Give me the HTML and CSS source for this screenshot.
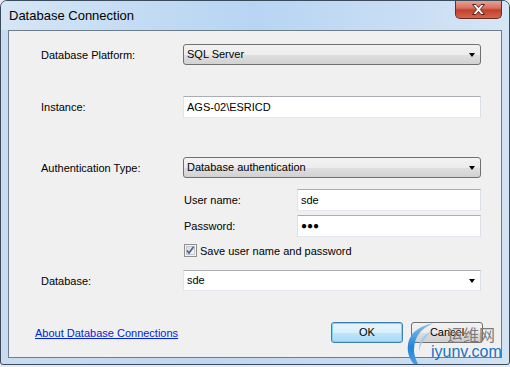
FILE: index.html
```html
<!DOCTYPE html>
<html>
<head>
    <title>Database Connection</title>
    <link rel="stylesheet" href="styles.css">
</head>
<body>
    <div class="window">
        <div class="titlebar">
            <span class="title">Database Connection</span>
            <div class="close-btn">
                <svg width="15" height="11" viewBox="0 0 15 11">
                    <path d="M1.5 0.5h3.5l2.5 3 2.5-3h3.5l-4.2 5 4.2 5h-3.5l-2.5-3-2.5 3h-3.5l4.2-5z" fill="#ffffff" stroke="#5a2020" stroke-width="1" stroke-linejoin="round"/>
                </svg>
            </div>
        </div>
        <div class="client">
            <div class="row row-platform">
                <label class="field-label">Database Platform:</label>
                <div class="combo">SQL Server<span class="arrow"></span></div>
            </div>
            <div class="row row-instance">
                <label class="field-label">Instance:</label>
                <div class="textbox">AGS-02\ESRICD</div>
            </div>
            <div class="row row-auth">
                <label class="field-label">Authentication Type:</label>
                <div class="combo">Database authentication<span class="arrow"></span></div>
            </div>
            <div class="sub-row row-user">
                <label class="sub-label">User name:</label>
                <div class="textbox small">sde</div>
            </div>
            <div class="sub-row row-pass">
                <label class="sub-label">Password:</label>
                <div class="textbox small dots">&#9679;&#9679;&#9679;</div>
            </div>
            <div class="sub-row row-save">
                <svg class="checkbox" width="13" height="13" viewBox="0 0 13 13">
                    <defs>
                        <linearGradient id="cbFill" x1="0" y1="0" x2="1" y2="1">
                            <stop offset="0" stop-color="#d8d8d8"/>
                            <stop offset="1" stop-color="#fbfbfb"/>
                        </linearGradient>
                    </defs>
                    <rect x="0.5" y="0.5" width="12" height="12" fill="#f4f4f4" stroke="#8e8f8f"/>
                    <rect x="2.5" y="2.5" width="8" height="8" fill="url(#cbFill)" stroke="#c6c6c6"/>
                    <path d="M3 6.5l2 2.6 4.6-6.4" fill="none" stroke="#4c6a9e" stroke-width="1.8"/>
                </svg>
                <span class="check-label">Save user name and password</span>
            </div>
            <div class="row row-database">
                <label class="field-label">Database:</label>
                <div class="combo editable">sde<span class="arrow"></span></div>
            </div>
            <div class="bottom-row">
                <a href="#" class="help-link">About Database Connections</a>
                <div class="buttons">
                    <div class="btn btn-default">OK</div>
                    <div class="btn">Cancel</div>
                </div>
            </div>
        </div>

        <!-- watermark stamped over the screenshot -->
        <div class="watermark">
            <svg class="swirl" width="40" height="50" viewBox="0 0 40 50">
                <defs>
                    <linearGradient id="swirlFill" x1="0" y1="0" x2="0" y2="1">
                        <stop offset="0" stop-color="#8cc2ee"/>
                        <stop offset="0.5" stop-color="#2284d8"/>
                        <stop offset="1" stop-color="#5aa8e6"/>
                    </linearGradient>
                </defs>
                <path d="M30 1 Q1 7 4 30 Q6 42 19 49 Q10 38 10 28 Q10 9 30 1 Z" fill="url(#swirlFill)"/>
                <path d="M28 9 Q14 15 15 30 Q16 20 28 9 Z" fill="#9ccbf1"/>
            </svg>
            <span class="wm-cn">运维网</span>
            <span class="wm-url">iyunv.com</span>
        </div>
    </div>
</body>
</html>
```

FILE: styles.css
```css
body {
    margin: 0;
    background: #e4ebf2;
    font-family: "Liberation Sans", Arial, sans-serif;
    font-size: 11px;
    color: #000;
}
.window {
    position: relative;
    width: 508px;
    height: 363px;
    border: 1px solid #3b4b5c;
    border-radius: 7px 7px 3px 3px;
    background: linear-gradient(to right, #c9dcef 0%, #bfd7f0 40%, #c6dcf1 75%, #d2e3f3 100%);
    overflow: hidden;
}
.titlebar {
    display: flex;
    justify-content: space-between;
    height: 29px;
    padding: 0 7px 0 8px;
    background: linear-gradient(to right, #d6e6f5 0%, #c4dcf4 25%, #b7d5f3 50%, #c9def4 80%, #d5e6f6 100%);
}
.title {
    font-size: 13px;
    line-height: 30px;
    color: #000;
}
.close-btn {
    display: flex;
    justify-content: center;
    align-items: center;
    width: 45px;
    height: 18px;
    margin-top: -1px;
    border: 1px solid #6b2a24;
    border-top: none;
    border-radius: 0 0 5px 5px;
    background: linear-gradient(#e9a99c 0%, #d8705f 45%, #c2402b 55%, #d2664f 100%);
}
.client {
    height: 326px;
    margin: 0 7px;
    border: 1px solid #6e7d8c;
    background: #f0f0f0;
}
.row {
    display: flex;
    align-items: center;
    margin-left: 32px;
}
.field-label {
    width: 142px;
}
.row-platform {
    margin-top: 13px;
}
.row-instance {
    margin-top: 31px;
}
.row-auth {
    margin-top: 39px;
}
.row-database {
    margin-top: 13px;
}
.combo {
    position: relative;
    box-sizing: border-box;
    width: 298px;
    height: 21px;
    padding-left: 3px;
    line-height: 19px;
    border: 1px solid #707070;
    border-radius: 3px;
    background: linear-gradient(#f3f3f3 0%, #ececec 50%, #dfdfdf 51%, #d2d2d2 100%);
}
.combo.editable {
    border: 1px solid;
    border-color: #abadb3 #dbdfe6 #e3e9ef #e2e3ea;
    border-radius: 0;
    background: #fff;
}
.arrow {
    position: absolute;
    right: 5px;
    top: 8px;
    border-left: 3.5px solid transparent;
    border-right: 3.5px solid transparent;
    border-top: 4px solid #000;
}
.textbox {
    box-sizing: border-box;
    width: 298px;
    height: 22px;
    padding-left: 3px;
    line-height: 20px;
    border: 1px solid;
    border-color: #abadb3 #dbdfe6 #e3e9ef #e2e3ea;
    background: #fff;
}
.textbox.small {
    width: 184px;
}
.textbox.dots {
    font-size: 10px;
    letter-spacing: 0;
}
.sub-row {
    display: flex;
    align-items: center;
    margin-left: 175px;
}
.sub-label {
    width: 113px;
}
.row-user {
    margin-top: 11px;
}
.row-pass {
    margin-top: 4px;
}
.row-save {
    margin-top: 7px;
    height: 13px;
}
.checkbox {
    display: block;
    margin-right: 3px;
}
.bottom-row {
    display: flex;
    align-items: center;
    justify-content: space-between;
    margin: 31px 18px 0 26px;
}
.help-link {
    color: #0020e8;
    text-decoration: underline;
}
.buttons {
    display: flex;
    gap: 8px;
}
.btn {
    box-sizing: border-box;
    width: 72px;
    height: 21px;
    line-height: 19px;
    text-align: center;
    border: 1px solid #707070;
    border-radius: 3px;
    background: linear-gradient(#f2f2f2 0%, #ebebeb 50%, #dddddd 51%, #cfcfcf 100%);
}
.btn-default {
    border-color: #3c7fb1;
    box-shadow: inset 0 0 0 1px #7fd3f7;
    background: linear-gradient(#e8f5fc 0%, #d9effb 50%, #bde6fb 51%, #a8daf5 100%);
}
.watermark {
    position: absolute;
    left: 403px;
    top: 318px;
    width: 107px;
    height: 49px;
    pointer-events: none;
}
.swirl {
    position: absolute;
    left: 0;
    top: 3px;
}
.wm-cn {
    position: absolute;
    left: 43px;
    top: 7px;
    font-family: "Noto Sans CJK SC", sans-serif;
    font-size: 16px;
    line-height: 16px;
    color: #7c7c7c;
}
.wm-url {
    position: absolute;
    left: 27px;
    top: 25px;
    font-size: 16px;
    line-height: 16px;
    color: #1b72c2;
}
```
